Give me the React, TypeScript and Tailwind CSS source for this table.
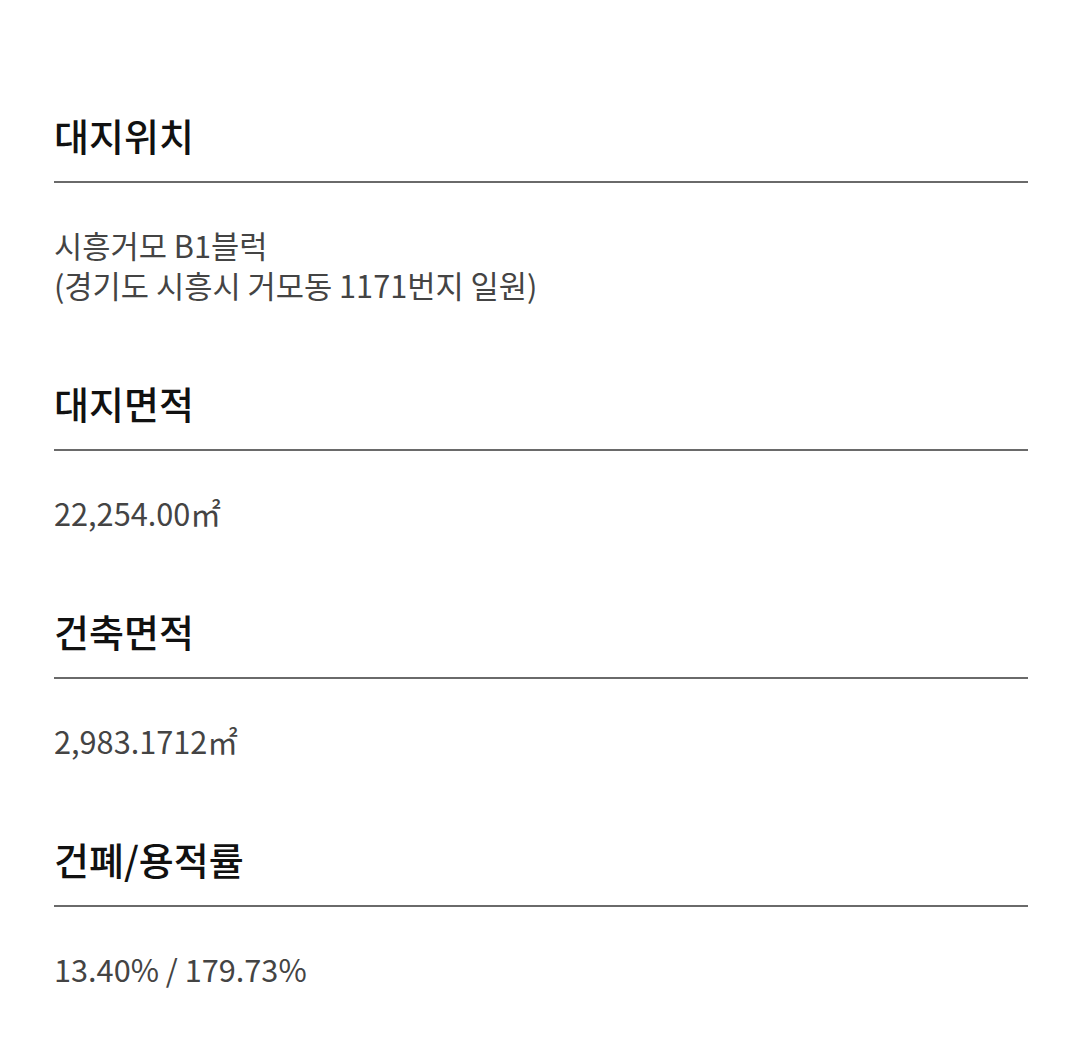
const items = [
  { title: "대지위치", lines: ["시흥거모 B1블럭", "(경기도 시흥시 거모동 1171번지 일원)"] },
  { title: "대지면적", lines: ["22,254.00㎡"] },
  { title: "건축면적", lines: ["2,983.1712㎡"] },
  { title: "건폐/용적률", lines: ["13.40% / 179.73%"] },
];

export default function App() {
  return (
    <div
      className="min-h-[1063px] bg-white px-[54px] pt-[111px]"
      style={{ fontFamily: '"Noto Sans CJK KR", "Noto Sans", sans-serif' }}
    >
      <div className="flex w-[974px] flex-col gap-[74px]">
        {items.map((it) => (
          <section key={it.title}>
            <h2 className="border-b-2 border-[#6a6a6a] pb-[22px] text-[38px] font-medium leading-[48px] text-[#111]">
              {it.title}
            </h2>
            <div className="mt-[42px] text-[30.7px] leading-[40px] text-[#444]">
              {it.lines.map((l) => (
                <p key={l}>{l}</p>
              ))}
            </div>
          </section>
        ))}
      </div>
    </div>
  );
}
